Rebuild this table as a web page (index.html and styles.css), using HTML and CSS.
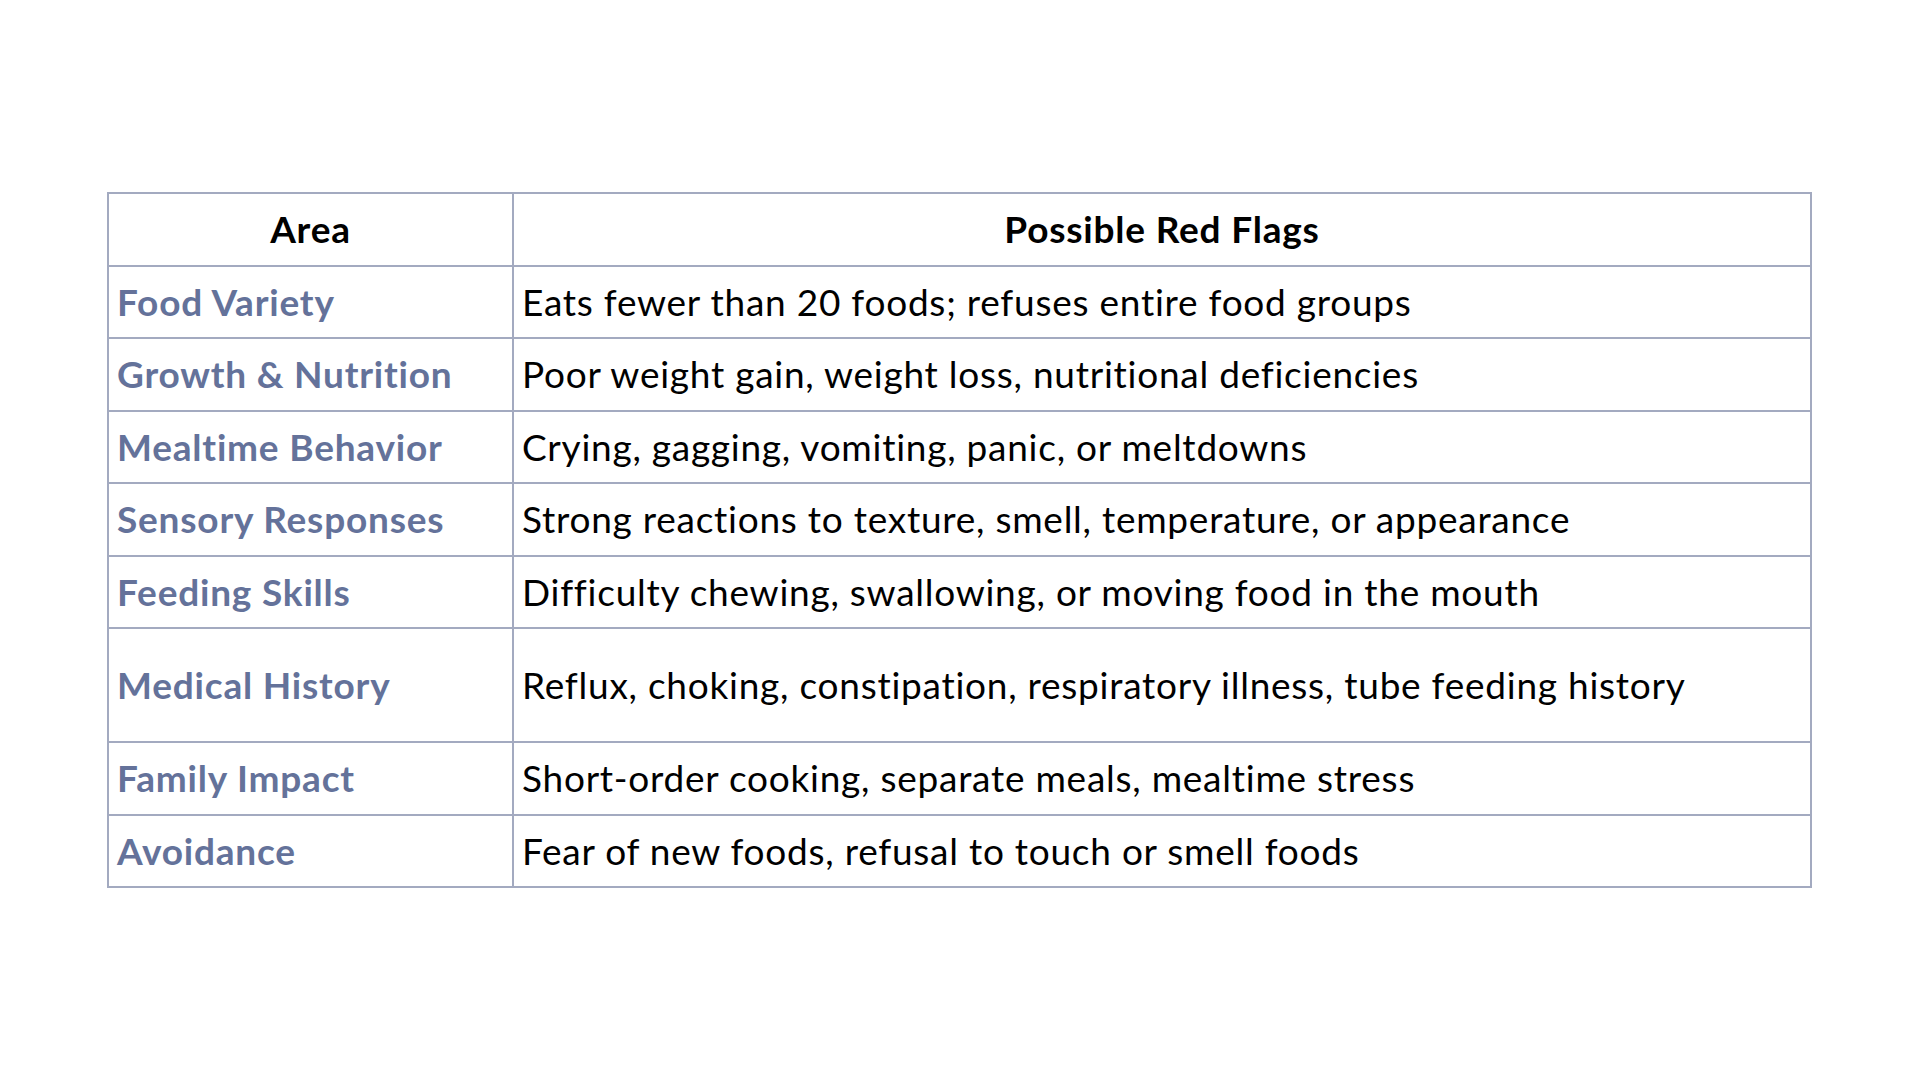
FILE: index.html
```html
<!DOCTYPE html>
<html lang="en">
<head>
<meta charset="utf-8">
<title>Red Flags</title>
<link rel="stylesheet" href="styles.css">
</head>
<body>
<main class="page">
  <table class="flags">
    <thead>
      <tr>
        <th class="col-area">Area</th>
        <th class="col-flags">Possible Red Flags</th>
      </tr>
    </thead>
    <tbody>
      <tr><td class="area">Food Variety</td><td class="flag">Eats fewer than 20 foods; refuses entire food groups</td></tr>
      <tr><td class="area">Growth &amp; Nutrition</td><td class="flag">Poor weight gain, weight loss, nutritional deficiencies</td></tr>
      <tr><td class="area">Mealtime Behavior</td><td class="flag">Crying, gagging, vomiting, panic, or meltdowns</td></tr>
      <tr><td class="area">Sensory Responses</td><td class="flag">Strong reactions to texture, smell, temperature, or appearance</td></tr>
      <tr><td class="area">Feeding Skills</td><td class="flag">Difficulty chewing, swallowing, or moving food in the mouth</td></tr>
      <tr class="tall"><td class="area">Medical History</td><td class="flag">Reflux, choking, constipation, respiratory illness, tube feeding history</td></tr>
      <tr><td class="area">Family Impact</td><td class="flag">Short-order cooking, separate meals, mealtime stress</td></tr>
      <tr><td class="area">Avoidance</td><td class="flag">Fear of new foods, refusal to touch or smell foods</td></tr>
    </tbody>
  </table>
</main>
</body>
</html>
```
FILE: styles.css
```css
html, body {
  margin: 0;
  padding: 0;
  background: #ffffff;
}
.page {
  padding: 192px 0 0 107px;
}
.flags {
  border-collapse: collapse;
  width: 1705px;
  font-family: Lato, "Noto Sans", sans-serif;
  font-size: 37px;
  color: #000000;
  table-layout: fixed;
}
.flags th,
.flags td {
  border: 2px solid #a3aac0;
  height: 70.5px;
  padding: 0 8px;
  line-height: 1.2;
  vertical-align: middle;
  white-space: nowrap;
}
.flags tr {
  border-bottom: 2px solid #8790ab;
}
.col-area {
  width: 387px;
}
.flags th {
  font-weight: 700;
  text-align: center;
  letter-spacing: 0.8px;
}
.area {
  font-weight: 700;
  color: #64729a;
  letter-spacing: 0.8px;
  padding-left: 7px;
}
.flag {
  font-weight: 400;
  letter-spacing: 0.75px;
}
.tall td {
  height: 112px;
}
```
